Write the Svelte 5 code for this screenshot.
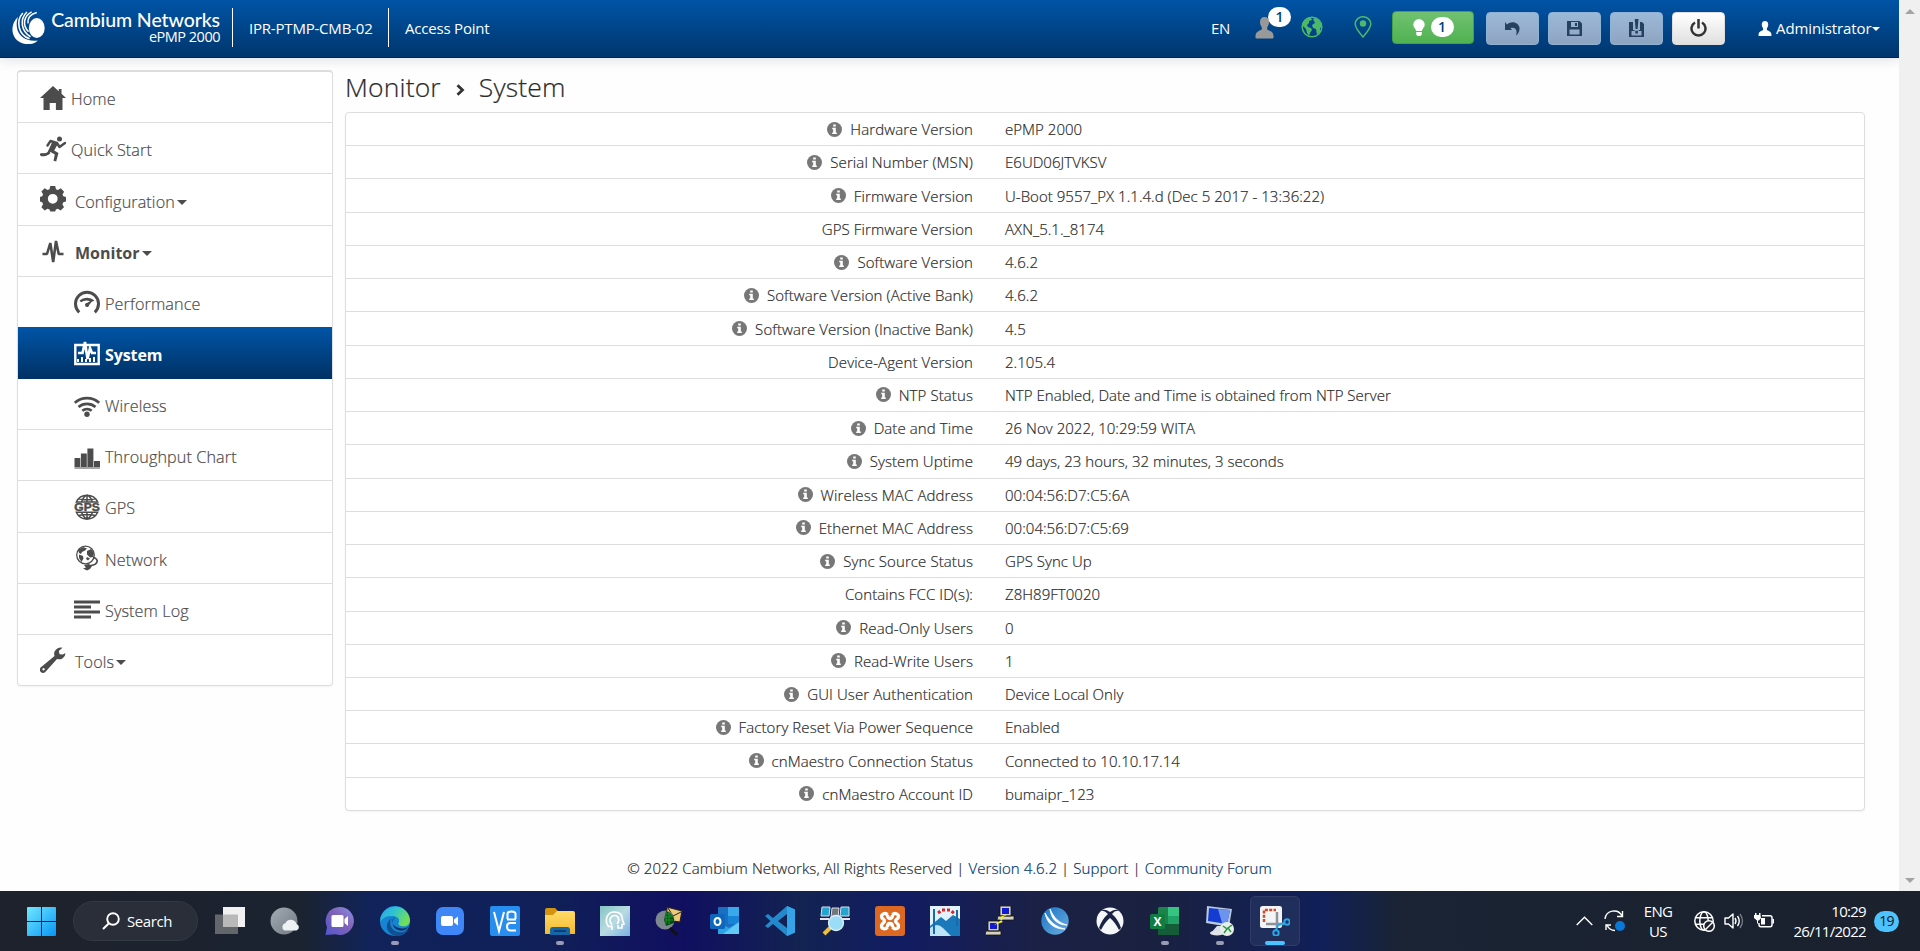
<script>
  const menu = [
    { t: 'Home', i: 'home' },
    { t: 'Quick Start', i: 'run' },
    { t: 'Configuration', i: 'gear', caret: true },
    { t: 'Monitor', i: 'pulse', caret: true, bold: true },
    { t: 'Performance', i: 'gauge', sub: true },
    { t: 'System', i: 'system', sub: true, active: true },
    { t: 'Wireless', i: 'wifi', sub: true },
    { t: 'Throughput Chart', i: 'bars', sub: true },
    { t: 'GPS', i: 'gps', sub: true },
    { t: 'Network', i: 'network', sub: true },
    { t: 'System Log', i: 'log', sub: true },
    { t: 'Tools', i: 'wrench', caret: true }
  ];

  const rows = [
    ['Hardware Version', 'ePMP 2000', 1],
    ['Serial Number (MSN)', 'E6UD06JTVKSV', 1],
    ['Firmware Version', 'U-Boot 9557_PX 1.1.4.d (Dec 5 2017 - 13:36:22)', 1],
    ['GPS Firmware Version', 'AXN_5.1._8174', 0],
    ['Software Version', '4.6.2', 1],
    ['Software Version (Active Bank)', '4.6.2', 1],
    ['Software Version (Inactive Bank)', '4.5', 1],
    ['Device-Agent Version', '2.105.4', 0],
    ['NTP Status', 'NTP Enabled, Date and Time is obtained from NTP Server', 1],
    ['Date and Time', '26 Nov 2022, 10:29:59 WITA', 1],
    ['System Uptime', '49 days, 23 hours, 32 minutes, 3 seconds', 1],
    ['Wireless MAC Address', '00:04:56:D7:C5:6A', 1],
    ['Ethernet MAC Address', '00:04:56:D7:C5:69', 1],
    ['Sync Source Status', 'GPS Sync Up', 1],
    ['Contains FCC ID(s):', 'Z8H89FT0020', 0],
    ['Read-Only Users', '0', 1],
    ['Read-Write Users', '1', 1],
    ['GUI User Authentication', 'Device Local Only', 1],
    ['Factory Reset Via Power Sequence', 'Enabled', 1],
    ['cnMaestro Connection Status', 'Connected to 10.10.17.14', 1],
    ['cnMaestro Account ID', 'bumaipr_123', 1]
  ];

  // Menu icons, 26 x 26 box, painted with currentColor
  const icons = {
    home: '<path d="M13 1 0 13h3.500v12h6.200v-7h6.200v7h6.600V13H26l-4.500-4.200V4h-2.800v2.200z"/>',
    run: '<circle cx="19.500" cy="3" r="2.500"/><path d="M17 7 10.500 5 7.500 9.500M17 7l2.500 4 5.500-4M9 17l-3 1.500H1" fill="none" stroke="currentColor" stroke-width="2.400" stroke-linecap="round" stroke-linejoin="round"/><path d="M12.500 5.500l5.700 1.800-4 7.200 4.300 2.500-2.300 8.500-2.700-.7 1.300-6.300-4.800-2.700-1.500 2.700-4 1.700H1v-2.500h4l2.500-1.500z"/>',
    gear: '<path fill-rule="evenodd" d="M10.500 1h5l.8 3.200 2 .8 2.900-1.700 3.400 3.400L23 9.500l.8 2 2.700.7v4.600l-2.700.8-.9 2 1.600 2.900-3.500 3.400-2.800-1.700-2 .8-.7 2h-5l-.8-2-2-.8-2.900 1.700-3.400-3.400L3.100 19.500l-.8-2L0 16.700v-4.600l2.300-.7.8-2-1.700-2.800 3.400-3.400L7.700 5l2-.8zM13 9a5 5 0 1 0 0 10 5 5 0 0 0 0-10z" transform="translate(0 -.9) scale(.98)"/>',
    pulse: '<path d="M2.500 16h4.500L10.300 5l2.900 19L16 3l2.700 13H23.500" fill="none" stroke="currentColor" stroke-width="2.600" stroke-linejoin="bevel"/>',
    gauge: '<path d="M5.200 23.300A11.500 11.500 0 1 1 20.800 23.300" fill="none" stroke="currentColor" stroke-width="3"/><path d="M5.500 11.500a10 8 0 0 1 15 0l-3 1.500-3.500 4.500a2 2 0 0 1-2-3l4-2.300a9 7 0 0 0-9 1z"/><circle cx="13" cy="16" r="2"/>',
    system: '<path d="M1.300 5h23.400v19H1.300z" fill="none" stroke="currentColor" stroke-width="2.400"/><path d="M3 22v-3h2v3zm4 0v-5h2v5zm4 0v-3h2v3zm4 0v-4h2v4zm4 0v-5h2v5z"/><path d="M4 13h4.500l2.500-11 2.500 17 2.500-11 2 5H22" fill="none" stroke="currentColor" stroke-width="2.600"/>',
    wifi: '<g fill="none" stroke="currentColor" stroke-width="2.700"><path d="M.8 10.800a18 18 0 0 1 24.400 0M4.500 15a13 13 0 0 1 17 0M8.300 18.800a7.500 7.500 0 0 1 9.400 0"/></g><circle cx="13" cy="22.200" r="2.700"/>',
    bars: '<path d="M.5 15h5.800v9H.5zM6.900 10.500h5.900v13.500H6.900zM13.400 5.500h6v18.500h-6zM20 18h6v6h-6zM.5 24.500h25.500v1H.5z"/>',
    gps: '<g fill="none" stroke="currentColor" stroke-width="1.500"><path d="M2.300 8A11.800 11.800 0 0 1 23.700 8zM2.300 18.300A11.800 11.800 0 0 0 23.700 18.300zM13 1v7M13 18v7M7.500 8q1.500-5 5.500-7 4 2 5.500 7M7.500 18q1.500 5 5.500 7 4-2 5.500-7M4.500 4.800q8.500 2 17 0M4.500 21.400q8.500-2 17 0"/></g><text x="13" y="16.600" text-anchor="middle" font-size="10.300" font-weight="900" stroke="currentColor" stroke-width=".4" font-family="Liberation Sans, sans-serif" textLength="25.500" lengthAdjust="spacingAndGlyphs">GPS</text>',
    network: '<circle cx="11.500" cy="10" r="8.800" fill="none" stroke="currentColor" stroke-width="1.300"/><path d="M4 5l5-3 4 1.500-2 2-3 1.500-1 2-2-1zM13 6l4-2 3 4-1 4-3 .5-3-3zM5 9.500l4 1.500.5 2.500-2 3.500-2.500-4zM13 12l3 1.500-2 2-2-1.500z"/><path d="M19 12q5 2 4 5t-6 3.500l-2 1" fill="none" stroke="currentColor" stroke-width="1.700"/><path d="M10 20l5-1 3 2-2 3-3 1.500-4-2 3-1z"/>',
    log: '<path d="M0 4.500h26v3H0zM0 9.500h17v3H0zM0 14.500h26v3H0zM0 19.500h17v3H0z"/>',
    wrench: '<path d="M25.500 6a6.500 6.500 0 0 1-8.500 6L6 24.300a3.300 3.300 0 1 1-4.500-4.500L14.500 9A6.500 6.500 0 0 1 22.500.8L18.800 4l.8 3.300 3.200.3zM3.500 21a1.200 1.200 0 1 0 .1 0z"/>'
  };

  // Taskbar icons, 30 x 30 box
  const apps = [
    { s: '<path d="M0 8.500h23V28H0z" fill="#63666a"/><path d="M8 1h22v20H8z" fill="#f1f1f1"/><path d="M8 8.500h15V21H8z" fill="#b9b9b9"/>' },
    { s: '<circle cx="14" cy="15" r="13.500" fill="url(#gw)"/><path d="M14.500 24.500a4 4 0 0 1 1-7.500 6 6 0 0 1 11 1 3.400 3.400 0 0 1 0 6.500z" fill="#eef1f4"/>' },
    { s: '<path d="M15 1a14 14 0 1 1-4.500 27.300L.5 29l1.500-8A14 14 0 0 1 15 1z" fill="url(#gc)"/><rect x="6.500" y="9" width="12" height="12" rx="1.500" fill="#fff"/><path d="M19.500 13l3.500-3v10l-3.500-3z" fill="#fff"/>' },
    { s: '<circle cx="15" cy="15" r="15" fill="#1685d1"/><path d="M.5 12A15 15 0 0 1 30 14c0 6-5 7-9 6-3-1-3-2-2-4 1-4-3-6-7-6-5 0-9 1-11.500 6z" fill="url(#ge)"/><path d="M12 12c-5 6 1 16 11 14 3-.5 5-2 6-3-4 8-14 9-19 4s-4-11 2-15z" fill="#104f91"/><path d="M15 11c-4 2-4 9 4 11 5 1 8 0 10-2-2 4-7 6-11 4-6-2-7-9-3-13z" fill="#18306a"/>', d: 1 },
    { s: '<rect x="1" y="1" width="28" height="28" rx="7" fill="#3f87f7"/><rect x="6" y="10" width="12" height="10" rx="2" fill="#fff"/><path d="M19 13.500l4-3v9l-4-3z" fill="#fff"/>' },
    { s: '<rect width="30" height="30" rx="2" fill="#278ef0"/><path d="M4 6l5 19L14 6M17.500 13V8q0-2.500 4-2.500T25.500 8v5M26 17h-6q-3 0-3 3.500t3 4h6M17 13.500h9" fill="none" stroke="#fff" stroke-width="2"/>' },
    { s: '<path d="M0 4q0-2 2-2h8l3 3v8H0z" fill="#d3930f"/><path d="M12 5h16q2 0 2 2v21H0V9h8z" fill="url(#gf)"/><path d="M5 29v-5q0-3 3-3h14q3 0 3 3v5z" fill="#1764a6"/><path d="M9 24h12v2H9z" fill="#0b3f75"/>', d: 1 },
    { s: '<path d="M0 0h30v30H0z" fill="url(#gm)"/><path d="M12 24v-3.500H8.500C4 14 7 6 14.500 6c6 0 8 4 8 8l1.500 4-2 .8V22h-4v-3M12 19c-4-5-1-9.500 2.500-9.500 4 0 6 5 2.500 8.500" fill="none" stroke="#fff" stroke-width="1.700"/>' },
    { s: '<path d="M12 1l15 4-2 11-14-2z" fill="#edc978" stroke="#222" stroke-width="1.200"/><path d="M13 2l5 8 8-4" fill="none" stroke="#222"/><circle cx="10" cy="14" r="9.500" fill="#7d8790"/><path d="M11 5q9 3 8 12l-8 3-2-6z" fill="#074d11"/><path d="M11 7l6 3m-7 1h8m-8 3h8m-7-8v12m3-11v11" stroke="#1aa12f" stroke-width=".8"/><path d="M15 22l7 7" stroke="#111" stroke-width="3"/>' },
    { s: '<rect x="8" y="1" width="21" height="27" rx="1" fill="#1b6fc1"/><path d="M18 1h11v9H18z" fill="#3aa9ec"/><path d="M18 10h11v8H18z" fill="#1685d8"/><path d="M8 16l11 6 10-6v12H8z" fill="#2aa4e5"/><path d="M29 16v12H13z" fill="#60c9f8"/><rect y="8" width="15" height="15" rx="1.500" fill="#0f67bd"/><ellipse cx="7.500" cy="15.500" rx="3" ry="3.600" fill="none" stroke="#fff" stroke-width="2"/>' },
    { s: '<path d="M22 0l8 3.500v23L22 30 8 18l-5 4-3-2 5.500-5L0 10l3-2 5 4zM22 8l-9 7 9 7z" fill="#2489ca" fill-rule="evenodd"/><path d="M22 0l8 3.500v23L22 30z" fill="#35a3e8"/>' },
    { s: '<g stroke="#d8e1ed"><path d="M2 1h8l-1 9H1zM21 1h8v9h-9z" fill="#25a5cd"/><path d="M12 2h7l-1 9h-7z" fill="#73767a"/></g><path d="M0 13h9M21 13h9" stroke="#e4e5e8" stroke-width="2"/><path d="M11 21l-7 7" stroke="#f2c02f" stroke-width="4"/><circle cx="16" cy="17" r="7.500" fill="#9bdcf7" stroke="#dceefa" stroke-width="1.300"/>' },
    { s: '<rect width="30" height="30" rx="3" fill="#dc6822"/><path d="M12.500 9c-2-3-6-1-6 1.500 0 2.500 3 2.500 3 4.500s-3 2-3 5 4 4 6 1M17.500 9c2-3 6-1 6 1.500 0 2.500-3 2.500-3 4.500s3 2 3 5-4 4-6 1M12.500 9q0 3.500 2.500 3.500T17.500 9M12.500 21q0-3.500 2.500-3.500t2.500 3.500" fill="none" stroke="#fff" stroke-width="3.300" stroke-linejoin="round"/>' },
    { s: '<path d="M0 0h30v30H0z" fill="#e1f3fb"/><path d="M0 20L11 11l5 4 7-6 7 4v17H0z" fill="#1a79bb"/><path d="M0 22q7-6 13 0t8 8H0z" fill="#bde3f6"/><path d="M4 3v25M27 4v16" stroke="#176ca7" stroke-width="2"/><path d="M8 7l4-3h8l5 4" fill="none" stroke="#d8262c" stroke-width="3" stroke-dasharray="3 2"/>' },
    { s: '<g stroke="#111" stroke-width=".8"><path d="M15 0h11v10H15zM13 10h16v4H12zM3 15h11v10H3zM1 25h15v4H0z" fill="#d4d2c2"/></g><path d="M17 2h7v6h-7zM5 17h7v6H5z" fill="#101bd2"/><path d="M23 8l-8 3 3 2-9 6 9-3-3-3z" fill="#fff313"/>' },
    { s: '<circle cx="15" cy="15" r="13.700" fill="url(#gd)"/><path d="M5 7c2 10 8 16 20 16-9-2-15-7-20-16zM10 3c1 10 7 16 17 16-8-2-13-7-17-16z" fill="#fff" stroke="#fff" stroke-width=".8"/>' },
    { s: '<circle cx="15" cy="15" r="13.500" fill="#f5f6f8"/><path d="M6 5q3-3 9 1 6-4 9-1-4-1-7 3 6 5 9 14l-2 2Q20 16 15 12 10 16 6 24l-2-2Q7 13 13 8 9 4 6 5z" fill="#1a2344"/>' },
    { s: '<rect x="8" y="1" width="21" height="28" rx="1.500" fill="#1c834b"/><path d="M18 1h11v9H18z" fill="#36c481"/><path d="M18 10h11v8H18z" fill="#20a366"/><path d="M8 18h21v11H8z" fill="#155d38"/><rect y="8" width="15" height="15" rx="1.500" fill="#117d43"/><text x="7.500" y="19.800" text-anchor="middle" font-family="Open Sans, sans-serif" font-size="12" font-weight="700" fill="#fff">X</text>', d: 1 },
    { s: '<path d="M2 0l25 3-3 18L1 17z" fill="#b8cadd"/><path d="M4 2l21 2-3 14L3 15z" fill="#143bd2"/><path d="M13 3l12 1-3 14-5-1z" fill="#6c94ef"/><path d="M12 20h7l1 7H6z" fill="#dadfe6"/><ellipse cx="12" cy="27" rx="7" ry="2.500" fill="#dfe3e8"/><circle cx="22" cy="23" r="7" fill="#e8eeea"/><path d="M18 20l4 3-3 4M27 19l-4 3 3 4" fill="none" stroke="#2b9641" stroke-width="1.500"/>', d: 1 },
    { s: '<rect width="22" height="22" rx="2.500" fill="#f3f4f5"/><path d="M4 16V4h12" fill="none" stroke="#d24a26" stroke-width="2.500" stroke-dasharray="3 1.300"/><path d="M17 6v16M6 18h18" stroke="#8c9499" stroke-width="2.500"/><g fill="none" stroke="#29a6ea" stroke-width="2"><circle cx="27" cy="16" r="2.700"/><circle cx="16" cy="27" r="2.700"/><path d="M16 24l2-5M24 17l-6 2"/></g>', d: 2 }
  ];
</script>

{#snippet person()}
  <path d="M9 0c3 0 4.500 2 4.500 5 0 2.500-1 4-1.800 5.200v2.300c3 1.500 6.300 2.500 6.300 6.500v1.500q0 1-1 1H1q-1 0-1-1V19c0-4 3.300-5 6.300-6.500v-2.300C5.500 9 4.500 7.500 4.500 5 4.500 2 6 0 9 0z" fill="currentColor" />
{/snippet}

<div class="screen">
  <div class="page">
    <div class="view">
      <header>
        <svg class="logo" viewBox="0 0 32 32">
          <path d="M6 5.500C-3 13-1.500 30 13 32c5 .5 9-.5 12-3.500C15 30 6 25 4.800 16 4.300 12 4.600 9 6 5.500z" fill="#fff" />
          <g fill="none" stroke="#fff" stroke-width="1.500">
            <path d="M10.500 2C3.500 10 6 23 17 27M14.500 1C7 8 9 20 18 25M19 .8C11 5 10 14 16 20M24 1.500C18 3 15 7 15.500 12" />
          </g>
          <ellipse cx="24" cy="16.500" rx="7.700" ry="9.700" fill="#fff" />
        </svg>
        <div class="brand"><b>Cambium Networks</b><span>ePMP 2000</span></div>
        <div class="seg dev">IPR-PTMP-CMB-02</div>
        <div class="seg">Access Point</div>
        <div class="right">
          <span class="lang">EN</span>
          <div class="users">
            <svg width="19" height="22" viewBox="0 0 18 22">{@render person()}</svg>
            <i class="pill over">1</i>
          </div>
          <svg class="globe" width="22" height="22" viewBox="0 0 22 22">
            <circle cx="11" cy="11" r="9.800" fill="none" stroke="#4cb86a" stroke-width="1.500" />
            <path d="M2 6l4-4 4 0 1 2-3 1 0 2-2 2 1 2 3 1 1 2-2 3-1 3-2-3-1-4-3-3zM12 3l4-1 4 5 1 4-2 1 0 4-3 3-1-6-3-1-1-3 3-2z" fill="#4cb86a" />
          </svg>
          <svg class="pin" width="18" height="22" viewBox="0 0 18 22">
            <path d="M9 21Q1.200 12 1.200 8a7.800 7.300 0 0 1 15.600 0Q16.800 12 9 21z" fill="none" stroke="#4cb86a" stroke-width="1.500" />
            <circle cx="9" cy="7.500" r="3.200" fill="#4cb86a" />
          </svg>
          <div class="btn green">
            <svg width="12" height="17" viewBox="0 0 12 17"><path d="M6 0a5.700 5.700 0 0 1 5.700 5.700C11.700 8.500 9 9.500 9 12H3C3 9.500.3 8.500.3 5.700A5.700 5.700 0 0 1 6 0zM3.200 13h5.600v2.500L7.500 17h-3l-1.300-1.500z" fill="#fff" /></svg>
            <i class="pill">1</i>
          </div>
          <div class="btn"><svg width="15" height="15" viewBox="0 0 15 15"><path d="M0 1l2 2.500C7-1 14 2 14.500 7c.2 3-1 5.500-3.500 7.500 1.500-5 0-8.500-5.500-7.500L7 9 0 9z" fill="#26405f" /></svg></div>
          <div class="btn"><svg width="15" height="15" viewBox="0 0 15 15"><path fill-rule="evenodd" d="M0 0h12.500L15 2.500V15H0zM4 1v5h7V1zM2.500 8.500v5h10v-5zM8 2h2v3H8z" fill="#26405f" /></svg></div>
          <div class="btn"><svg width="15" height="18" viewBox="0 0 15 18"><path fill-rule="evenodd" d="M0 3h4v8h1.500v1H2.500v4.500h10V12H9.700v-1H11V3h2l2 2v13H0z" fill="#26405f" /><path d="M5.700 0h3.800l-.9 10H6.600zM6.300 11.800h2.600v2.600H6.300z" fill="#26405f" /></svg></div>
          <div class="btn white"><svg width="17" height="18" viewBox="0 0 17 18"><path d="M5 3.500a7 7 0 1 0 7 0M8.500 0v9.500" fill="none" stroke="#333" stroke-width="2.500" /></svg></div>
          <div class="admin">
            <svg width="14" height="15" viewBox="0 0 18 21">{@render person()}</svg>
            <span>Administrator</span><em class="caret"></em>
          </div>
        </div>
      </header>

      <div class="body">
        <nav>
          {#each menu as m}
            <div class="item" class:sub={m.sub} class:active={m.active} class:bold={m.bold} class:wide={m.caret}>
              <svg width="26" height="26" viewBox="0 0 26 26" fill="currentColor">{@html icons[m.i]}</svg>
              <span>{m.t}</span>{#if m.caret}<em class="caret"></em>{/if}
            </div>
          {/each}
        </nav>
        <main>
          <h1>
            <span>Monitor</span>
            <svg width="9" height="12" viewBox="0 0 9 12"><path d="M1.500 1.200L6.500 6l-5 4.800" fill="none" stroke="#333" stroke-width="2.800" /></svg>
            <span>System</span>
          </h1>
          <div class="table">
            {#each rows as [label, value, info]}
              <div class="row">
                <div class="label">
                  {#if info}
                    <svg width="15" height="15" viewBox="0 0 15 15"><circle cx="7.500" cy="7.500" r="7.500" fill="#777" /><path d="M6.200 2.500h2.600v2H6.200zM5.200 5.800h3.600v4.700h1v1.600H5.200v-1.600h1V7.300h-1z" fill="#fff" /></svg>
                  {/if}
                  <span>{label}</span>
                </div>
                <div class="value"><span>{value}</span></div>
              </div>
            {/each}
          </div>
        </main>
      </div>
      <footer><span>© 2022 Cambium Networks, All Rights Reserved | <b>Version 4.6.2</b> | <b>Support</b> | <b>Community Forum</b></span></footer>
    </div>
    <div class="scroll"><i class="up"></i><i class="down"></i></div>
  </div>

  <div class="taskbar">
    <svg width="0" height="0" class="defs">
      <defs>
        <linearGradient id="gwin" x2="1" y2="1"><stop stop-color="#71e8fd" /><stop offset="1" stop-color="#0795f6" /></linearGradient>
        <linearGradient id="gw" x2="1" y2="1"><stop stop-color="#a3abb4" /><stop offset="1" stop-color="#717983" /></linearGradient>
        <linearGradient id="gc" x1="1" x2="0" y2="1"><stop stop-color="#8a92e8" /><stop offset=".45" stop-color="#7f62b5" /><stop offset="1" stop-color="#5157cf" /></linearGradient>
        <linearGradient id="ge" x2="1" y2=".4"><stop stop-color="#29a5e8" /><stop offset=".5" stop-color="#2fc4cf" /><stop offset="1" stop-color="#72df57" /></linearGradient>
        <linearGradient id="gf" x2="0" y2="1"><stop stop-color="#ffdc69" /><stop offset="1" stop-color="#f3b92d" /></linearGradient>
        <linearGradient id="gm" x2="1" y2="1"><stop stop-color="#84c5c3" /><stop offset=".5" stop-color="#b9dbe2" /><stop offset="1" stop-color="#77b0df" /></linearGradient>
        <linearGradient id="gd" x2="1" y2="1"><stop stop-color="#1b73c1" /><stop offset="1" stop-color="#69aee4" /></linearGradient>
      </defs>
    </svg>
    <svg class="win" width="29" height="29" viewBox="0 0 29 29"><path d="M1 0h13v14H0V1q0-1 1-1zM15 0h13q1 0 1 1v13H15zM0 15h14v14H1q-1 0-1-1zM15 15h14v13q0 1-1 1H15z" fill="url(#gwin)" /></svg>
    <div class="search">
      <svg width="18" height="18" viewBox="0 0 18 18"><circle cx="11" cy="7" r="5.800" fill="none" stroke="#fff" stroke-width="1.900" /><path d="M7 11.200L1 17" stroke="#fff" stroke-width="2" /></svg>
      <span>Search</span>
    </div>
    <div class="apps">
      {#each apps as a}
        <div class="app" class:on={a.d === 2}>
          <svg width="30" height="30" viewBox="0 0 30 30">{@html a.s}</svg>
          {#if a.d}<i class:long={a.d === 2}></i>{/if}
        </div>
      {/each}
    </div>
    <div class="tray">
      <svg class="chev" width="17" height="10" viewBox="0 0 17 10"><path d="M.7 9L8.500 1.300 16.300 9" fill="none" stroke="#fff" stroke-width="1.400" /></svg>
      <svg class="sync" width="22" height="22" viewBox="0 0 22 22">
        <path d="M1 9a9 9 0 0 1 17-3M18.500 1v5.500H13M2 20v-5h5M3 15a9 9 0 0 0 8 5.500" fill="none" stroke="#fff" stroke-width="1.400" />
        <circle cx="16" cy="16" r="5" fill="#0a78d7" />
      </svg>
      <div class="kb"><span>ENG</span><span>US</span></div>
      <svg class="net" width="21" height="21" viewBox="0 0 21 21">
        <g fill="none" stroke="#fff" stroke-width="1.500"><circle cx="10" cy="10" r="9.200" /><ellipse cx="10" cy="10" rx="4.200" ry="9.200" /><path d="M1.500 6.700h17M1.500 13.300h9" /></g>
        <circle cx="15" cy="15" r="5.300" fill="#1b212d" stroke="#fff" stroke-width="1.500" /><path d="M11.500 18.500l7-7" stroke="#fff" stroke-width="1.500" />
      </svg>
      <svg class="vol" width="21" height="18" viewBox="0 0 21 18"><path d="M1 6h3.500L9 2v14l-4.500-4H1z" fill="none" stroke="#fff" stroke-width="1.400" stroke-linejoin="round" /><path d="M11 6q2 3 0 6M13.500 4q3.500 5 0 10" fill="none" stroke="#fff" stroke-width="1.400" /><path d="M16 2q5 7 0 14" fill="none" stroke="#777d87" stroke-width="1.300" /></svg>
      <svg class="bat" width="21" height="18" viewBox="0 0 21 18"><path d="M8 3.700h8q2 0 2 2v7q0 2-2 2H7q-2 0-2-2V11" fill="none" stroke="#fff" stroke-width="1.500" /><path d="M18.500 7H20v4.500h-1.500zM7 6h4v6.500H7zM1 1h1.500v2H5V1h1.500v2L7 6 5 8.500H4v3H3v-3L0 6V3h1z" fill="#fff" /></svg>
      <div class="clock"><span>10:29</span><span>26/11/2022</span></div>
      <i class="count">19</i>
    </div>
  </div>
</div>

<style>
  :global(body) { margin: 0; overflow: hidden; }
  .screen { width: 1920px; height: 951px; display: flex; flex-direction: column; font-family: "Open Sans", "Noto Sans", sans-serif; color: #2b2b2b; background: #fefefe; overflow: hidden; }
  i, em { font-style: normal; }
  span { white-space: nowrap; }
  .page { flex: 1; display: flex; min-height: 0; }
  .view { flex: 1; display: flex; flex-direction: column; min-width: 0; }
  header { height: 57px; flex: none; display: flex; align-items: center; background: linear-gradient(#0054a6, #00366d); border-bottom: 1px solid #00254d; color: #fff; box-shadow: 0 1px 12px rgba(0, 30, 90, .15); font-size: 15px; box-sizing: content-box; }
  .logo { width: 33px; height: 33px; margin: -3px 0 0 12px; flex: none; }
  .brand { width: 168px; margin-left: 7px; display: flex; flex-direction: column; align-items: flex-end; margin-top: -4px; flex: none; }
  .brand b { font: 500 19.500px/19px Lato, sans-serif; letter-spacing: -.1px; white-space: nowrap; }
  .brand span { font-size: 14.500px; line-height: 15px; letter-spacing: -.5px; }
  .seg { height: 39px; line-height: 40px; border-left: 1px solid #fff; margin-left: 12px; padding-left: 16px; margin-top: -2px; letter-spacing: -.2px; white-space: nowrap; flex: none; }
  .seg.dev { width: 127px; }
  .right { margin-left: auto; display: flex; align-items: center; }
  .lang { margin-right: 25px; margin-top: -1px; letter-spacing: -.3px; }
  .users { position: relative; display: flex; color: #999; margin-top: -2px; }
  .pill { width: 23px; height: 20px; border-radius: 10px; background: #fff; color: #003f80; font-size: 14px; font-weight: 600; line-height: 19px; text-align: center; }
  .over { position: absolute; left: 13px; top: -10px; }
  .globe { margin-left: 27px; margin-top: -3px; }
  .pin { margin-left: 31px; margin-top: -3px; }
  .btn { width: 53px; height: 33px; box-sizing: border-box; border-radius: 4px; border: 1px solid #8fb1d3; background: linear-gradient(#9cb9d8, #8ea4c1); display: flex; align-items: center; justify-content: center; margin-left: 9px; margin-top: -1px; }
  .btn.green { width: 82px; margin-left: 20px; margin-right: 3px; margin-top: -3px; gap: 6px; background: linear-gradient(#71c171, #50b250); border-color: #45a045; }
  .btn.white { background: linear-gradient(#fff, #e0e0e0); border-color: #ddd; }
  .admin { display: flex; align-items: center; margin: -1px 17px 0 33px; width: 124px; }
  .admin span { margin-left: 4px; letter-spacing: -.1px; }
  .admin .caret { margin-left: 1px; }
  .caret { border: 4.500px solid transparent; border-top-color: currentColor; border-bottom: 0; margin: 2px 0 0 2px; flex: none; }

  .body { display: flex; align-items: flex-start; padding: 12px 34px 0 17px; }
  nav { width: 316px; height: 616px; box-sizing: border-box; border: 1px solid #ddd; border-top-width: 2px; border-radius: 4px; background: #fff; flex: none; display: flex; flex-direction: column; box-shadow: 0 1px 2px rgba(0, 0, 0, .05); }
  .item { flex: 1; display: flex; align-items: center; padding: 0 0 0 22px; border-bottom: 1px solid #ddd; color: #4c4c4c; font-size: 16.200px; font-weight: 300; letter-spacing: .1px; -webkit-text-stroke: .2px; }
  .item:last-child { border-bottom: 0; }
  .item svg { flex: none; margin-top: 1px; -webkit-text-stroke: 0; letter-spacing: 0; }
  .item span { margin: 3px 0 0 5px; }
  .item.wide span { margin: 5px 0 0 9px; }
  .item.wide .caret { margin: 6px 0 0 2px; border-width: 5px 5px 0; }
  .item.wide svg { margin-top: 0; }
  .item.sub { padding-left: 56px; }
  .item.sub span { margin-top: 4px; }
  .item.bold { font-weight: 700; font-size: 16px; letter-spacing: 0; -webkit-text-stroke: 0; }
  .item.active { background: linear-gradient(#0054a6, #003265); color: #fff; font-weight: 700; font-size: 16px; letter-spacing: -.1px; -webkit-text-stroke: 0; border-color: #003265; box-shadow: 0 -1px #0054a6; }

  main { margin-left: 12px; flex: 1; }
  h1 { margin: 0; height: 42px; display: flex; align-items: center; font-size: 26.500px; font-weight: 300; letter-spacing: .15px; -webkit-text-stroke: .2px; line-height: 36px; box-sizing: border-box; padding-bottom: 8px; }
  h1 svg { margin: 5px 14px 0 15px; }
  .table { border: 1px solid #ddd; border-radius: 4px; background: #fff; height: 699px; box-sizing: border-box; display: flex; flex-direction: column; box-shadow: 0 1px 2px rgba(0, 0, 0, .05); }
  .row { flex: 1; display: flex; align-items: center; border-bottom: 1px solid #ddd; font-size: 15px; font-weight: 300; -webkit-text-stroke: .2px; }
  .row:last-child { border-bottom: 0; }
  .label { width: 627px; display: flex; justify-content: flex-end; align-items: center; gap: 8px; letter-spacing: .1px; }
  .value { margin-left: 32px; letter-spacing: .03px; }
  footer { text-align: center; font-size: 15px; font-weight: 300; letter-spacing: .09px; -webkit-text-stroke: .2px; margin-top: 47px; line-height: 21px; }
  footer b { color: #00366d; font-weight: 300; }

  .scroll { width: 21px; background: #f0f0f0; display: flex; flex-direction: column; justify-content: space-between; align-items: center; padding: 9px 0 8px; box-sizing: border-box; }
  .up { border: 5px solid transparent; border-bottom-color: #a3a3a3; border-top: 0; }
  .down { border: 5px solid transparent; border-top-color: #a3a3a3; border-bottom: 0; }

  .taskbar { height: 60px; flex: none; display: flex; align-items: center; color: #fff; background: linear-gradient(90deg, #1e222c 0, #1b2330 300px, #11235a 370px, #101f58 560px, #100f60 680px, #132351 800px, #111c62 900px, #1b2145 1040px, #1a2140 1150px, #101f58 1320px, #1a2434 1400px, #1b212d 100%); }
  .defs { position: absolute; }
  .win { margin-left: 27px; }
  .search { width: 125px; height: 40px; box-sizing: border-box; border: 1px solid #333943; border-radius: 20px; background: #292e39; margin-left: 17px; display: flex; align-items: center; padding-left: 28px; gap: 7px; font: 15px "Open Sans", sans-serif; letter-spacing: -.4px; }
  .apps { display: flex; margin-left: 5px; }
  .app { width: 50px; height: 50px; margin: 0 3px 0 2px; box-sizing: border-box; border-radius: 5px; display: flex; justify-content: center; align-items: center; position: relative; }
  .app.on { background: #202e5b; border: 1px solid #303c65; }
  .app i { position: absolute; bottom: 1px; left: 21px; width: 8px; height: 4px; border-radius: 2px; background: #9a9cb5; }
  .app i.long { width: 20px; left: 14px; bottom: 0; background: #4cc2ff; }
  .tray { margin-left: auto; display: flex; align-items: center; font-size: 15px; letter-spacing: -.7px; line-height: 20px; margin-right: 21px; }
  .sync { margin-left: 11px; }
  .kb { width: 40px; margin-left: 12px; display: flex; flex-direction: column; align-items: center; }
  .net { margin-left: 16px; }
  .vol { margin-left: 9px; }
  .bat { margin-left: 9px; }
  .clock { width: 84px; margin-left: 7px; display: flex; flex-direction: column; align-items: flex-end; }
  .count { width: 25px; height: 21px; border-radius: 11px; background: #4cc2ff; color: #111; text-align: center; font-size: 14px; margin-left: 8px; }
</style>
